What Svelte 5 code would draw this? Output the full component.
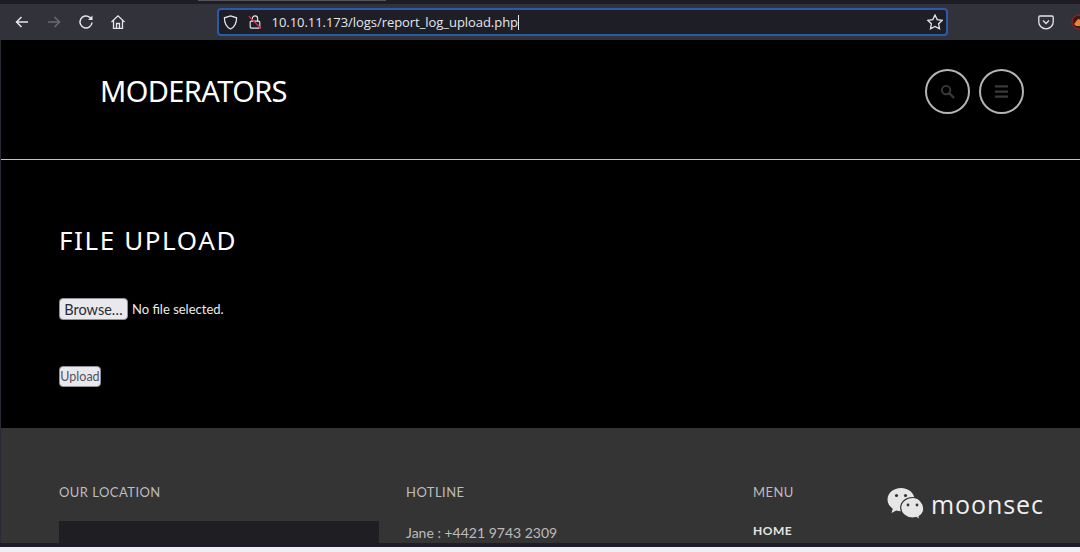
<script>
  const cols = [
    { title: 'OUR LOCATION', cls: 'c1' },
    { title: 'HOTLINE', cls: 'c2' },
    { title: 'MENU', cls: 'c3' }
  ];
</script>

<div class="shot">
  <div class="tabstrip"><div class="tab"></div></div>
  <div class="toolbar">
    <div class="nav">
      <svg class="ic" viewBox="0 0 16 16"><path d="M14 8H2.500M7.500 3 2.500 8l5 5" class="s light"/></svg>
      <svg class="ic" viewBox="0 0 16 16"><path d="M2 8h11.500M8.500 3l5 5-5 5" class="s dim"/></svg>
      <svg class="ic" viewBox="0 0 16 16"><path d="M14 8.500A6 6 0 1 1 11.800 3.300L14 5.500" class="s light"/><path d="M14.500 1.500v4.500H10z" fill="#e6e6ea"/></svg>
      <svg class="ic" viewBox="0 0 16 16"><path d="M1.500 8 8 1.800 14.500 8M3.500 6.500v7.800h9V6.500M6.500 14.300V9.500h3v4.800" class="s light thin"/></svg>
    </div>
    <div class="urlbar">
      <svg class="shield" viewBox="0 0 16 16"><path d="M8 1 14.500 3c0 5.500-1.800 9.700-6.500 12C3.300 12.700 1.500 8.500 1.500 3z" class="s light thin"/></svg>
      <svg class="lock" viewBox="0 0 16 16"><rect x="2.500" y="7" width="11" height="8" rx="1.500" class="s light thin"/><path d="M5 7V4a3 3 0 0 1 6 0v3" class="s light thin"/><path d="M1 1.500 15 15.500" stroke="#e22850" stroke-width="1.500" fill="none"/></svg>
      <span class="url">10.10.11.173/logs/report_log_upload.php</span><span class="caret"></span>
      <svg class="star" viewBox="0 0 16 16"><path d="M8 1l2.200 4.600 5 .7-3.600 3.500.9 5L8 12.400l-4.500 2.400.9-5L.8 6.300l5-.7z" class="s light thin"/></svg>
    </div>
    <div class="right">
      <svg class="pocket" viewBox="0 0 16 16"><path d="M2 2h12a1.200 1.200 0 0 1 1.200 1.200V8A7.200 6.800 0 0 1 .8 8V3.200A1.200 1.200 0 0 1 2 2z" class="s light thin"/><path d="M5 6.500l3 3 3-3" class="s light thin"/></svg>
      <div class="fox">
        <svg viewBox="0 0 12 16"><circle cx="8" cy="8" r="7" fill="#3a1a1a" stroke="#b0202a"/><path d="M3 10l4-5 5 1v6H5z" fill="#e8842a"/></svg>
      </div>
    </div>
  </div>

  <main class="page">
    <header class="head">
      <h1>MODERATORS</h1>
      <div class="btns">
        <div class="circle">
          <svg viewBox="0 0 16 16"><circle cx="6.500" cy="6.500" r="4.500" fill="none" stroke="#3a3a3a" stroke-width="2"/><path d="M10 10l5 5" stroke="#3a3a3a" stroke-width="2.400"/></svg>
        </div>
        <div class="circle">
          <svg viewBox="0 0 16 16"><path d="M1 2.500h14M1 8h14M1 13.500h14" stroke="#3a3a3a" stroke-width="2.400"/></svg>
        </div>
      </div>
    </header>
    <section class="content">
      <h2>FILE UPLOAD</h2>
      <div class="fileline">
        <button class="browse">Browse…</button>
        <span>No file selected.</span>
      </div>
      <button class="upload">Upload</button>
    </section>
  </main>

  <footer class="foot">
    {#each cols as c}
      <div class="col {c.cls}">
        <h3>{c.title}</h3>
        {#if c.cls === 'c1'}<div class="map"></div>{/if}
        {#if c.cls === 'c2'}<p>Jane : +4421 9743 2309</p>{/if}
        {#if c.cls === 'c3'}<a href="#home">HOME</a>{/if}
      </div>
    {/each}
    <div class="mark">
      <svg viewBox="0 0 40 34">
        <path d="M15 1C7.500 1 1.500 6 1.500 12.500c0 3.800 2 7 5.300 9.200L5.500 26l4.700-2.500c1.500.4 3 .7 4.800.7 7.500 0 13.500-5.200 13.500-11.700S22.500 1 15 1z" fill="#e6e6e6"/>
        <path d="M26.500 10.500c-6.700 0-11.800 4.600-11.800 10.200S19.800 31 26.500 31c1.300 0 2.500-.2 3.700-.5l3.900 2.500-1-3.500c2.900-1.900 4.700-4.700 4.700-7.800 0-5.600-4.700-11.200-11.300-11.200z" fill="#e6e6e6" stroke="#343434" stroke-width="1.200"/>
        <circle cx="10.500" cy="8.500" r="1.600" fill="#343434"/><circle cx="19.500" cy="8.500" r="1.600" fill="#343434"/>
        <circle cx="22" cy="18" r="1.400" fill="#343434"/><circle cx="31" cy="18" r="1.400" fill="#343434"/>
      </svg>
      <span>moonsec</span>
    </div>
  </footer>
  <div class="bottom"></div>
</div>

<style>
  :global(body) { margin: 0; background: #000; }
  .shot {
    width: 1080px; height: 552px; overflow: hidden; display: flex; flex-direction: column;
    font-family: Lato, "Noto Sans", "Liberation Sans", sans-serif; position: relative;
  }
  .tabstrip { height: 4px; background: #1e1d25; position: relative; flex: none; }
  .tab { position: absolute; left: 198px; width: 188px; top: 0; height: 1px; background: #55555c; }
  .toolbar {
    height: 36px; flex: none; background: #31323a; display: flex; align-items: center; position: relative;
  }
  .nav { display: flex; gap: 16px; padding-left: 14px; width: 203px; box-sizing: border-box; flex: none; }
  .ic { width: 16px; height: 16px; }
  .s { fill: none; stroke-width: 1.500; }
  .light { stroke: #e6e6ea; }
  .dim { stroke: #6a6b72; }
  .thin { stroke-width: 1.300; }
  .urlbar {
    margin-left: 13.500px; width: 731px; height: 28px; box-sizing: border-box; border: 2px solid #2d5aa8; border-radius: 4px;
    background: #1e1e26; display: flex; align-items: center; position: relative; flex: none;
  }
  .shield { width: 15px; height: 15px; margin-left: 4px; }
  .lock { width: 14px; height: 14px; margin-left: 10px; }
  .url { font-size: 13px; color: #e6e6ea; margin-left: 10px; letter-spacing: -0.05px; font-family: "Open Sans", sans-serif; white-space: nowrap; }
  .caret { width: 1px; height: 15px; background: #e6e6ea; }
  .star { width: 16px; height: 16px; position: absolute; right: 3px; top: 4px; }
  .right { margin-left: 90.500px; display: flex; align-items: center; gap: 17px; flex: none; }
  .pocket { width: 16px; height: 16px; }
  .fox { width: 12px; height: 16px; display: flex; }
  .page { height: 388px; flex: none; background: #000; border-left: 1px solid #2a2a32; box-sizing: border-box; }
  .head {
    height: 120px; box-sizing: border-box; border-bottom: 1px solid #c4c4c4;
    display: flex; justify-content: space-between; align-items: flex-start;
    padding: 28px 56px 0 99px;
  }
  h1 { margin: 0; font-size: 29px; line-height: 46px; font-weight: 400; color: #fff; letter-spacing: -0.6px; font-family: "Noto Sans", sans-serif; }
  .btns { display: flex; gap: 9.500px; margin-top: 1px; }
  .circle {
    width: 45px; height: 45px; box-sizing: border-box; border: 2px solid #b4b4b4; border-radius: 50%;
    display: flex; align-items: center; justify-content: center;
  }
  .circle svg { width: 15px; height: 15px; }
  .content { padding: 62px 0 0 58px; }
  h2 { margin: 0; font-size: 26px; line-height: 36px; font-weight: 400; color: #fff; letter-spacing: 1.600px; font-family: "Noto Sans", sans-serif; }
  .fileline { display: flex; align-items: center; gap: 4px; margin-top: 40px; color: #ebebeb; font-size: 13px; }
  button {
    background: #e9e9ed; border: 1px solid #8f8f9d; border-radius: 4px; color: #2b2a33; padding: 0;
    font-family: Lato, sans-serif;
  }
  .browse { width: 69px; height: 22px; font-size: 14.500px; }
  .upload { display: block; margin-top: 46px; width: 42px; height: 21px; font-size: 12.500px; color: #54545c; }
  .foot { height: 115px; flex: none; background: #343434; position: relative; display: flex; padding-left: 58px; border-left: 1px solid #2a2a32; overflow: hidden; box-sizing: border-box; }
  .col { padding-top: 54px; color: #bcbcbc; }
  .c1 { width: 347px; } .c2 { width: 347px; }
  h3 { margin: 0; font-size: 13px; line-height: 20px; font-weight: 400; letter-spacing: 0.450px; color: #bdbdbd; }
  .map { margin-top: 19px; width: 320px; height: 40px; background: #1e1e23; }
  p { margin: 21px 0 0; font-size: 14px; line-height: 20px; color: #bcbcbc; }
  a { display: block; margin-top: 19px; color: #e4e4e4; font-size: 12px; line-height: 20px; letter-spacing: 0.500px; text-decoration: none; font-weight: 700; }
  .mark { position: absolute; left: 885px; top: 59px; display: flex; align-items: center; gap: 5px; }
  .mark svg { width: 40px; height: 34px; }
  .mark span { font-size: 25px; line-height: 33px; color: #efefef; letter-spacing: 0.900px; font-family: "Open Sans", sans-serif; }
  .bottom { height: 9px; background: linear-gradient(#1e1e2a 0 4px, #f0f0f0 4px); flex: none; }
</style>
